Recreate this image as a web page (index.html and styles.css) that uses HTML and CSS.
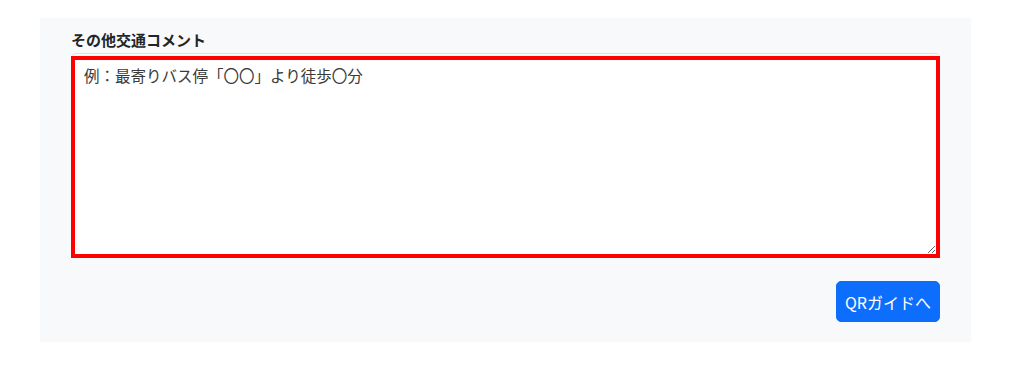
FILE: index.html
```html
<!DOCTYPE html>
<html lang="ja">
<head>
<meta charset="utf-8">
<link rel="stylesheet" href="styles.css">
</head>
<body>
<div class="panel">
  <label class="label" for="comment">その他交通コメント</label>
  <div class="field">
    <textarea id="comment" class="textarea">例：最寄りバス停「〇〇」より徒歩〇分</textarea>
  </div>
  <div class="actions">
    <button class="btn" type="button">QRガイドへ</button>
  </div>
</div>
</body>
</html>
```

FILE: styles.css
```css
html, body {
  margin: 0;
  padding: 0;
  background: #ffffff;
}
body {
  font-family: "Noto Sans CJK JP", "Noto Sans", sans-serif;
  color: #212529;
}
.panel {
  margin: 18px 0 0 40px;
  width: 931px;
  height: 324px;
  box-sizing: border-box;
  background: #f8f9fa;
  padding: 11px 31px 0 31px;
  display: flex;
  flex-direction: column;
}
.label {
  display: block;
  font-size: 15px;
  font-weight: 700;
  line-height: 22px;
  color: #212529;
  margin-bottom: 2px;
}
.field {
  border-top: 1px solid #dee2e6;
  border-radius: 5px 5px 0 0;
  padding-top: 2px;
}
.textarea {
  display: block;
  width: 100%;
  height: 202px;
  box-sizing: border-box;
  border: 4px solid #ff0000;
  background: #ffffff;
  padding: 3px 9px;
  font-family: "Noto Sans CJK JP", "Noto Sans", sans-serif;
  font-size: 15.5px;
  line-height: 24px;
  color: #3a3a3a;
  resize: vertical;
  outline: none;
  margin: 0;
}
.actions {
  display: flex;
  justify-content: flex-end;
  margin-top: 23px;
}
.btn {
  background: #0d6efd;
  color: #ffffff;
  border: 1px solid #0d6efd;
  border-radius: 5px;
  font-family: "Noto Sans CJK JP", "Noto Sans", sans-serif;
  font-size: 16px;
  line-height: 24px;
  height: 41px;
  width: 104px;
  padding: 0;
  cursor: pointer;
}
```
